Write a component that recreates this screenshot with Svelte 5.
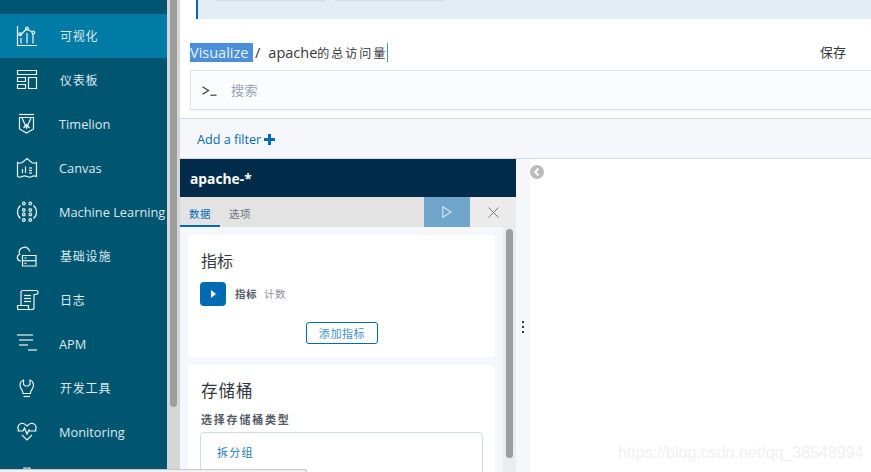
<script lang="ts">
    const cjk = true;
    const navItems = [
        { label: '', icon: ['M2 -10a8 8 0 1 0 16 0a8 8 0 1 0 -16 0', 'M2 -6h16'] },
        { label: '可视化', cjk, active: true, icon: ['M.5 0v19.5h19.5', 'M3 9.5L9.5 3l6 3', 'M4 12v5.5', 'M10 7v10.5', 'M16 8v9.5', 'M1.8 8.2a1.4 1.4 0 1 0 2.8 0a1.4 1.4 0 1 0 -2.8 0', 'M8.6 2.4a1.4 1.4 0 1 0 2.8 0a1.4 1.4 0 1 0 -2.8 0', 'M15 6.4a1.4 1.4 0 1 0 2.8 0a1.4 1.4 0 1 0 -2.8 0'] },
        { label: '仪表板', cjk, icon: ['M.5.5h19v4h-19z', 'M.5 7.5h8v4h-8z', 'M.5 14.5h8v4h-8z', 'M11.5 7.5h8v11h-8z'] },
        { label: 'Timelion', icon: ['M2 .5h15', 'M2.5 3.5h14v11.5l-7 4l-7-4z', 'M5 4l4.5 10l4.5-10', 'M6.5 14l3-3.500l3 3.500'] },
        { label: 'Canvas', icon: ['M.5 4.5q2.4 1.2 4.7 0L10 .5l4.8 4q2.4 1.2 4.7 0v14q-2.4-1.2-4.7 0t-4.8 0t-4.8 0t-4.7 0z', 'M5.5 11v4', 'M8.5 8.5v6.5', 'M12 10h3', 'M12 12.5h3', 'M12 15h3'] },
        { label: 'Machine Learning', icon: ['M3.5 3.5Q.5 6 .5 10t3 6.5', 'M16.5 3.5Q19.5 6 19.5 10t-3 6.5', 'M5.5 1.5a1.3 1.3 0 1 0 2.6 0a1.3 1.3 0 1 0 -2.6 0', 'M12 1.5a1.3 1.3 0 1 0 2.6 0a1.3 1.3 0 1 0 -2.6 0', 'M5.5 8a1.3 1.3 0 1 0 2.6 0a1.3 1.3 0 1 0 -2.6 0', 'M12 8a1.3 1.3 0 1 0 2.6 0a1.3 1.3 0 1 0 -2.6 0', 'M5.5 12.5a1.3 1.3 0 1 0 2.6 0a1.3 1.3 0 1 0 -2.6 0', 'M12 12.5a1.3 1.3 0 1 0 2.6 0a1.3 1.3 0 1 0 -2.6 0', 'M5.5 18a1.3 1.3 0 1 0 2.6 0a1.3 1.3 0 1 0 -2.6 0', 'M12 18a1.3 1.3 0 1 0 2.6 0a1.3 1.3 0 1 0 -2.6 0'] },
        { label: '基础设施', cjk, icon: ['M4 15H3.5a3.5 3.5 0 0 1 -.8-6.8a4.5 4.5 0 0 1 3-6.5a5 5 0 0 1 7 3.8', 'M5.5 9.5h13.5v10.5h-13.5z', 'M5.5 14.7h13.5', 'M7.5 12h2', 'M7.5 17.3h2'] },
        { label: '日志', cjk, icon: ['M4 15.5V3a2 2 0 0 1 2-2.5h13a1 1 0 0 1 0 4h-2v13a2 2 0 0 1 -2 2H2', 'M.5 15.5h11v2.5a2 2 0 0 0 1.5 2', 'M.5 15.5v2.5a2 2 0 0 0 1.5 2', 'M7 5.5h7', 'M7 8.5h7', 'M7 11.5h7'] },
        { label: 'APM', icon: ['M0 1h16', 'M2 6h14', 'M2 11h9', 'M11 16h9'] },
        { label: '开发工具', cjk, icon: ['M6.500 2C3 3 2 7.500 4 10.500c1.200 1.800 2 2.800 2 5h7.500c0-2.200 .8-3.200 2-5c2-3 1-7.500-2.500-8.500v4.500l-1.800 1.500h-3l-1.700-1.500z', 'M6.500 18.500h6.500'] },
        { label: 'Monitoring', icon: ['M.5 9H6l1.5-3l2.5 6l2-4l1 1h6.5', 'M2 9C-1 4 3 .5 6.5 1.5C8 2 9 3 10 4c1-1 2-2 3.5-2.5C17 .5 21 4 18 9', 'M5 13l5 5l5-5'] },
        { label: '', icon: ['M7 2h6v4H7z'] }
    ];
</script>

{#snippet navIcon(paths: string[])}
    <svg class="nav-icon" viewBox="0 0 20 20" fill="none" stroke="currentColor" stroke-width="1.2">
        {#each paths as d}
            <path {d} />
        {/each}
    </svg>
{/snippet}

<div class="page">
    <nav class="nav">
        {#each navItems as item}
            <div class="nav-row" class:active={item.active}>
                {@render navIcon(item.icon)}
                <span class="nav-label" class:cjk={item.cjk}>{item.label}</span>
            </div>
        {/each}
    </nav>

    <div class="page-scroll"><div class="page-thumb"></div></div>

    <main class="main">
        <div class="callout">
            <span class="callout-btn"></span>
            <span class="callout-btn"></span>
        </div>

        <div class="crumbs">
            <span class="crumb-sel">Visualize </span>
            <span class="crumb-sep">/</span>
            <span class="crumb-title">apache<span class="cjk-wide">的总访问量</span></span>
            <span class="caret"></span>
            <span class="save">保存</span>
        </div>

        <div class="search">
            <svg class="prompt" viewBox="0 0 16 10" fill="none" stroke="#343741" stroke-width="1.2">
                <path d="M.5 .5L7 4.5L.5 8.5" />
                <path d="M9 9.5h6.5" />
            </svg>
            <span class="search-text">搜索</span>
        </div>

        <div class="filters">
            <span>Add a filter</span>
            <svg class="plus" viewBox="0 0 11 11"><path d="M4 0h3v4h4v3H7v4H4V7H0V4h4z" fill="#006bb4" /></svg>
        </div>

        <div class="editor">
            <section class="panel">
                <header class="panel-head">apache-*</header>
                <div class="tabs">
                    <span class="tab selected">数据</span>
                    <span class="tab">选项</span>
                    <span class="tab-space"></span>
                    <button class="run" aria-label="run">
                        <svg viewBox="0 0 10 12" width="10" height="12" fill="none" stroke="#d5e5f0" stroke-width="1.2"><path d="M.8 .8L9 6L.8 11.2z" /></svg>
                    </button>
                    <button class="discard" aria-label="discard">
                        <svg viewBox="0 0 11 11" width="11" height="11" fill="none" stroke="#6f7680" stroke-width="1"><path d="M.5 .5l10 10M10.5 .5l-10 10" /></svg>
                    </button>
                </div>
                <div class="panel-body">
                    <div class="cards">
                        <div class="card metric">
                            <h3 class="card-title">指标</h3>
                            <div class="metric-row">
                                <span class="toggle"><svg viewBox="0 0 5 8" width="5" height="8"><path d="M0 0l5 4l-5 4z" fill="#fff" /></svg></span>
                                <b class="metric-name">指标</b>
                                <span class="metric-kind">计数</span>
                            </div>
                            <div class="add-wrap"><span class="add-btn">添加指标</span></div>
                        </div>
                        <div class="card bucket">
                            <h3 class="card-title big">存储桶</h3>
                            <div class="bucket-label">选择存储桶类型</div>
                            <div class="bucket-box">拆分组</div>
                        </div>
                    </div>
                    <div class="panel-scroll"><div class="panel-thumb"></div></div>
                </div>
            </section>

            <div class="resizer"><i></i><i></i><i></i></div>

            <section class="vis">
                <svg class="collapse" viewBox="0 0 14 14" width="14" height="14">
                    <circle cx="7" cy="7" r="7" fill="#bbb" />
                    <path d="M8.5 3.5L5 7l3.5 3.5" fill="none" stroke="#fff" stroke-width="2" />
                </svg>
            </section>
        </div>
    </main>

    <div class="status"></div>
    <div class="watermark">https://blog.csdn.net/qq_38548994</div>
</div>

<style>
    :global(body) {
        margin: 0;
        background: #fff;
    }
    .page {
        position: relative;
        display: flex;
        width: 871px;
        height: 472px;
        overflow: hidden;
        font-family: "Open Sans", "Noto Sans CJK SC", sans-serif;
    }
    .nav {
        width: 167px;
        flex-shrink: 0;
        background: #005571;
        margin-top: -30px;
        height: 502px;
    }
    .nav-row {
        display: flex;
        align-items: center;
        height: 44px;
        padding-left: 17px;
        color: #eef5f7;
    }
    .nav-row.active { background: #007ba6; }
    .nav-icon {
        width: 20px;
        height: 20px;
        flex-shrink: 0;
        overflow: visible;
    }
    .nav-label {
        margin-left: 22px;
        font-size: 12.8px;
        white-space: nowrap;
        color: #dde9ed;
    }
    .nav-label.cjk {
        margin-left: 23px;
        padding-bottom: 2px;
        font-size: 12px;
        letter-spacing: 0.8px;
        font-family: "Noto Sans CJK SC", sans-serif;
    }
    .page-scroll {
        width: 13px;
        flex-shrink: 0;
        background: #d6d6d6;
        padding-left: 3px;
        box-sizing: border-box;
    }
    .page-thumb {
        width: 7px;
        height: 407px;
        background: #9e9e9e;
        border-radius: 0 0 4px 4px;
    }
    .main {
        flex: 1;
        min-width: 0;
        display: flex;
        flex-direction: column;
        color: #343741;
    }
    .callout {
        display: flex;
        gap: 10px;
        height: 19px;
        margin-left: 16px;
        padding-left: 18px;
        background: #e3edf6;
        border-left: 2px solid #006bb4;
        flex-shrink: 0;
    }
    .callout-btn {
        width: 109px;
        height: 1px;
        background: #d2dde6;
    }
    .crumbs {
        display: flex;
        align-items: center;
        height: 51px;
        flex-shrink: 0;
        padding: 15px 25px 0 10px;
        box-sizing: border-box;
        font-size: 14.5px;
        line-height: 19px;
        color: #343741;
    }
    .crumb-sel {
        width: 63px;
        background: #4a90d9;
        color: #e8f1fb;
        white-space: pre;
    }
    .crumb-sep { margin-left: 2px; }
    .crumb-title { margin-left: 8px; }
    .cjk-wide {
        font-size: 12px;
        letter-spacing: 2px;
        font-family: "Noto Sans CJK SC", sans-serif;
    }
    .caret {
        width: 1px;
        height: 19px;
        background: #4a90d9;
    }
    .save {
        margin-left: auto;
        padding-bottom: 2px;
        font-size: 13px;
        font-family: "Noto Sans CJK SC", sans-serif;
    }
    .search {
        display: flex;
        align-items: center;
        height: 40px;
        margin-left: 10px;
        padding-left: 11px;
        box-sizing: border-box;
        background: #fbfcfd;
        border-top: 1px solid #e0e3ea;
        border-left: 1px solid #e0e3ea;
        border-bottom: 1px solid #dedede;
        box-shadow: 0 1px 2px rgba(0, 0, 0, 0.06);
        flex-shrink: 0;
    }
    .prompt {
        width: 15px;
        height: 10px;
        margin-top: 2px;
    }
    .search-text {
        margin-left: 14px;
        padding-bottom: 2px;
        font-size: 13px;
        color: #98a2b3;
        letter-spacing: 0.5px;
        font-family: "Noto Sans CJK SC", sans-serif;
    }
    .filters {
        display: flex;
        align-items: center;
        height: 41px;
        margin-top: 8px;
        padding: 2px 0 0 17px;
        box-sizing: border-box;
        background: #f5f7fa;
        border-top: 1px solid #d3dae6;
        border-bottom: 1px solid #d3dae6;
        font-size: 12.6px;
        color: #006bb4;
        flex-shrink: 0;
    }
    .plus {
        width: 11px;
        height: 11px;
        margin-left: 3px;
    }
    .editor {
        flex: 1;
        min-height: 0;
        display: flex;
    }
    .panel {
        width: 336px;
        flex-shrink: 0;
        display: flex;
        flex-direction: column;
        background: #f5f7fa;
    }
    .panel-head {
        height: 38px;
        flex-shrink: 0;
        display: flex;
        align-items: center;
        padding-left: 10px;
        background: #002b49;
        color: #fff;
        font-size: 13.8px;
        font-weight: 700;
    }
    .tabs {
        display: flex;
        height: 30px;
        flex-shrink: 0;
        background: #e3e3e3;
        font-family: "Noto Sans CJK SC", sans-serif;
    }
    .tab {
        width: 40px;
        height: 30px;
        box-sizing: border-box;
        padding-top: 9px;
        text-align: center;
        font-size: 10.5px;
        line-height: 15px;
        letter-spacing: 0.5px;
        color: #69707d;
    }
    .tab.selected {
        color: #006bb4;
        border-bottom: 2px solid #006bb4;
    }
    .tab-space { flex: 1; }
    .run, .discard {
        width: 46px;
        height: 30px;
        padding: 0;
        border: none;
        display: flex;
        align-items: center;
        justify-content: center;
    }
    .run { background: #70a6cc; }
    .discard { background: #ebebeb; }
    .panel-body {
        flex: 1;
        min-height: 0;
        display: flex;
        overflow: hidden;
    }
    .cards {
        width: 307px;
        margin: 8px 8px 0 8px;
        display: flex;
        flex-direction: column;
        gap: 8px;
        flex-shrink: 0;
    }
    .card {
        background: #fff;
        border-radius: 4px;
        padding: 0 12px;
        flex-shrink: 0;
    }
    .metric { height: 122px; box-sizing: border-box; padding-top: 14px; }
    .bucket { height: 120px; box-sizing: border-box; padding-top: 14px; }
    .card-title {
        margin: 0;
        padding-left: 1px;
        font-size: 16px;
        font-weight: 400;
        line-height: 22px;
        color: #343741;
        font-family: "Noto Sans CJK SC", sans-serif;
    }
    .card-title.big { font-size: 16.5px; letter-spacing: 1px; }
    .metric-row {
        display: flex;
        align-items: center;
        margin-top: 11px;
        font-size: 10.5px;
        font-family: "Noto Sans CJK SC", sans-serif;
    }
    .toggle {
        width: 26px;
        height: 24px;
        border-radius: 4px;
        background: #006bb4;
        display: flex;
        align-items: center;
        justify-content: center;
    }
    .metric-name {
        margin-left: 9px;
        padding-bottom: 2px;
        color: #555c68;
        letter-spacing: 0.5px;
    }
    .metric-kind {
        margin-left: 7px;
        padding-bottom: 2px;
        color: #8b919c;
        letter-spacing: 0.5px;
    }
    .add-wrap {
        display: flex;
        margin: 16px 0 0 106px;
    }
    .add-btn {
        width: 72px;
        height: 22px;
        box-sizing: border-box;
        border: 1px solid #006bb4;
        border-radius: 3px;
        text-align: center;
        font-size: 11px;
        line-height: 21px;
        letter-spacing: 0.6px;
        color: #3f8fc6;
        font-family: "Noto Sans CJK SC", sans-serif;
    }
    .bucket-label {
        margin-top: 10px;
        padding-left: 1px;
        font-size: 11px;
        font-weight: 700;
        line-height: 16px;
        letter-spacing: 1.8px;
        color: #555c68;
        font-family: "Noto Sans CJK SC", sans-serif;
    }
    .bucket-box {
        width: 283px;
        height: 60px;
        margin-top: 5px;
        box-sizing: border-box;
        border: 1px solid #d3dae6;
        border-radius: 4px;
        padding: 11px 0 0 16px;
        font-size: 11px;
        line-height: 16px;
        letter-spacing: 1.2px;
        color: #1a78bb;
        font-family: "Noto Sans CJK SC", sans-serif;
    }
    .panel-scroll {
        width: 13px;
        flex-shrink: 0;
        background: #ececec;
        padding: 2px 3px 0;
        box-sizing: border-box;
    }
    .panel-thumb {
        width: 7px;
        height: 229px;
        background: #9e9e9e;
        border-radius: 4px;
    }
    .resizer {
        width: 14px;
        flex-shrink: 0;
        background: #f5f7fa;
        display: flex;
        flex-direction: column;
        align-items: center;
        justify-content: center;
        gap: 3px;
        padding-top: 22px;
        box-sizing: border-box;
    }
    .resizer i {
        width: 2px;
        height: 2px;
        background: #343741;
    }
    .vis {
        flex: 1;
        background: #fff;
        padding-top: 6px;
    }
    .collapse {
        display: block;
    }
    .status {
        position: absolute;
        left: 0;
        top: 469px;
        width: 307px;
        height: 6px;
        box-sizing: border-box;
        background: #f1f1f1;
        border: 1px solid #c8c8c8;
        border-left: none;
        border-radius: 0 3px 0 0;
    }
    .watermark {
        position: absolute;
        left: 618px;
        top: 444px;
        font-family: "Liberation Sans", sans-serif;
        font-size: 16px;
        line-height: 18px;
        color: #f0f0f0;
        white-space: nowrap;
    }
</style>
